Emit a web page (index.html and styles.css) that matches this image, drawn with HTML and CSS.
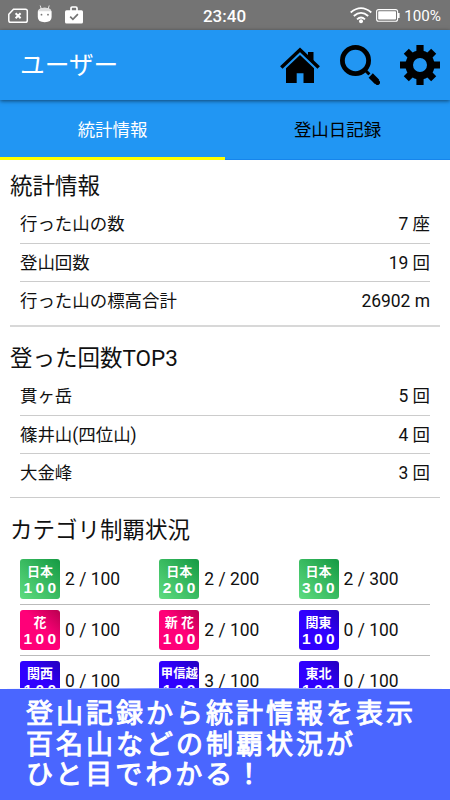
FILE: index.html
```html
<!DOCTYPE html>
<html lang="ja">
<head>
  <meta charset="UTF-8">
  <meta name="viewport" content="width=device-width, initial-scale=1.0">
  <title>ユーザー</title>
  <link rel="stylesheet" href="styles.css">
</head>
<body>
  <div class="status-bar">
    <div class="status-left">
      <svg class="icon-sim" width="22" height="16" viewBox="0 0 22 16"><path d="M5.5 1.2H17.5Q19.3 1.2 19.3 3V12.5Q19.3 14.3 17.5 14.3H2.6Q.8 14.3.8 12.5V6.2Z" fill="none" stroke="#fff" stroke-width="1.5"/><path d="M7.6 5.3l5 5M12.6 5.3l-5 5" stroke="#fff" stroke-width="2"/></svg>
      <svg class="icon-droid" width="16" height="18" viewBox="0 0 16 18"><path d="M3.2.5l1.3 4M12.2.5L11 4.500" stroke="#e4e4e4" stroke-width="1"/><path d="M.8 6.500Q2 2.800 7.700 2.800T14.600 6.500V12Q14.600 17.200 7.700 17.200T.8 12Z" fill="#fff"/><path d="M1 6.200Q2 2.800 7.700 2.800T14.400 6.200Z" fill="#ddd"/><circle cx="4.500" cy="9.700" r=".9" fill="#777"/><circle cx="11" cy="9.700" r=".9" fill="#777"/></svg>
      <svg class="icon-bag" width="18" height="18" viewBox="0 0 18 18"><path d="M6 5V2.200Q6 1 7.200 1H10.800Q12 1 12 2.200V5" fill="none" stroke="#fff" stroke-width="1.700"/><rect y="4.300" width="18" height="13.200" rx="1.500" fill="#fff"/><path d="M5.200 10.600l2.700 2.700 5-5.200" fill="none" stroke="#747474" stroke-width="1.700"/></svg>
    </div>
    <div class="clock">23:40</div>
    <div class="status-right">
      <svg class="icon-wifi" width="22" height="17" viewBox="0 0 22 17"><g fill="none" stroke="#fff" stroke-width="1.800"><path d="M.7 5.500Q11-3.200 21.300 5.500"/><path d="M3.800 9Q11 2.700 18.200 9"/><path d="M7 12.300Q11 8.700 15 12.300"/></g><circle cx="11" cy="14.300" r="2" fill="#fff"/></svg>
      <svg class="icon-battery" width="24" height="13" viewBox="0 0 24 13"><rect x=".6" y=".6" width="21" height="11.600" rx="2" fill="none" stroke="#fff" stroke-width="1.100"/><rect x="2.200" y="2.200" width="17.800" height="8.400" rx=".8" fill="#fff"/><path d="M22 4h1.600v5H22z" fill="#fff"/></svg>
      <span>100%</span>
    </div>
  </div>

  <header class="header">
    <h1>ユーザー</h1>
    <div class="header-icons">
      <svg width="40" height="40" viewBox="0 0 40 40"><path d="M1.300 22.500L20 4.800 38.700 22.500" fill="none" stroke="#000" stroke-width="3.500"/><path d="M28 7h5.500v11L28 12.800z"/><path d="M20 10L34 23.200V38H23.500V28.200H16.700V38H6V23.200z"/></svg>
      <svg width="40" height="40" viewBox="0 0 40 40"><circle cx="15.500" cy="15.500" r="13.100" fill="none" stroke="#000" stroke-width="4.800"/><path d="M24.500 24.500l5 5" stroke="#000" stroke-width="3"/><path d="M30.700 30.500l6.400 6.300" stroke="#000" stroke-width="6" stroke-linecap="butt"/><path d="M35.500 35.500l2 2" stroke="#000" stroke-width="5" stroke-linecap="round"/><path d="M27.300 32.300l5-5" stroke="#2196f3" stroke-width="1"/></svg>
      <svg width="40" height="40" viewBox="0 0 40 40"><g stroke="#000" stroke-width="7.200"><path d="M20 0V11M20 29V40M0 20H11M29 20H40"/><path d="M6.300 6.300L13 13M27 27l6.700 6.700M33.700 6.300L27 13M13 27l-6.700 6.700"/></g><circle cx="20" cy="20" r="10.800" fill="none" stroke="#000" stroke-width="7.600"/></svg>
    </div>
  </header>

  <nav class="tabs">
    <div class="tab active">統計情報</div>
    <div class="tab">登山日記録</div>
  </nav>

  <main>
    <section class="stats">
      <h2>統計情報</h2>
      <ul class="list">
        <li><span>行った山の数</span><span>7 座</span></li>
        <li><span>登山回数</span><span>19 回</span></li>
        <li><span>行った山の標高合計</span><span>26902 m</span></li>
      </ul>
    </section>

    <section class="ranking">
      <h2>登った回数TOP3</h2>
      <ul class="list">
        <li><span>貫ヶ岳</span><span>5 回</span></li>
        <li><span>篠井山(四位山)</span><span>4 回</span></li>
        <li><span>大金峰</span><span>3 回</span></li>
      </ul>
    </section>

    <section class="category">
      <h2>カテゴリ制覇状況</h2>
      <div class="category-row">
        <div class="item"><div class="badge green"><span>日本</span><b>100</b></div>2 / 100</div>
        <div class="item"><div class="badge green"><span>日本</span><b>200</b></div>2 / 200</div>
        <div class="item"><div class="badge green"><span>日本</span><b>300</b></div>2 / 300</div>
      </div>
      <div class="category-row">
        <div class="item"><div class="badge pink"><span>花</span><b>100</b></div>0 / 100</div>
        <div class="item"><div class="badge pink"><span>新 花</span><b>100</b></div>2 / 100</div>
        <div class="item"><div class="badge blue"><span>関東</span><b>100</b></div>0 / 100</div>
      </div>
      <div class="category-row">
        <div class="item"><div class="badge blue"><span>関西</span><b>100</b></div>0 / 100</div>
        <div class="item"><div class="badge blue"><span class="narrow">甲信越</span><b>100</b></div>3 / 100</div>
        <div class="item"><div class="badge blue"><span>東北</span><b>100</b></div>0 / 100</div>
      </div>
    </section>
  </main>

  <div class="caption">
    登山記録から統計情報を表示<br>
    百名山などの制覇状況が<br>
    ひと目でわかる！
  </div>
</body>
</html>
```
FILE: styles.css
```css
* {
  box-sizing: border-box;
}

body {
  margin: 0;
  height: 800px;
  overflow: hidden;
  display: flex;
  flex-direction: column;
  background: #fff;
  color: #111;
  font-family: Roboto, "Noto Sans CJK JP", sans-serif;
  font-size: 17.45px;
}

svg {
  display: block;
  flex: none;
}

h1, h2 {
  margin: 0;
  font-weight: 400;
}

.status-bar {
  flex: none;
  height: 30px;
  padding: 0 10px 0 8px;
  display: grid;
  grid-template-columns: 1fr auto 1fr;
  align-items: center;
  background: #747474;
  color: #fff;
}

.status-left, .status-right {
  display: flex;
  align-items: center;
}

.icon-droid {
  margin: -3px 0 0 7px;
}

.icon-bag {
  margin: -1px 0 0 12px;
}

.clock {
  font-size: 17px;
  font-weight: 500;
  line-height: 30px;
  padding: 1px 0 0 1px;
}

.status-right {
  justify-content: flex-end;
  font-size: 15.2px;
}

.status-right span {
  margin-left: 4px;
  margin-right: -1px;
}

.icon-wifi {
  margin-top: -1px;
}

.icon-battery {
  margin-left: 4px;
  margin-top: -1px;
}

.header {
  flex: none;
  height: 70px;
  padding: 0 10px 0 20px;
  display: flex;
  align-items: center;
  justify-content: space-between;
  position: relative;
  background: #2196f3;
  box-shadow: 0 1px 4px rgba(0, 0, 0, .55);
}

.header h1 {
  color: #fff;
  font-size: 24.7px;
  line-height: 70px;
  padding-top: 2px;
}

.header-icons {
  display: flex;
  gap: 20px;
}

.tabs {
  flex: none;
  height: 60px;
  display: flex;
  background: #2196f3;
}

.tab {
  flex: 1;
  height: 60px;
  line-height: 61px;
  text-align: center;
  color: #000;
  border-bottom: 1px solid #1685ec;
}

.tab.active {
  color: #fff;
  border-bottom: 3px solid #ffff00;
}

main {
  flex: 1;
  min-height: 0;
  overflow: hidden;
  padding: 0 10px;
}

section {
  padding: 12px 0 4px;
  border-bottom: 1px solid #ccc;
}

section h2 {
  height: 38px;
  line-height: 38px;
  font-size: 22.5px;
}

.stats {
  padding-top: 7px;
  border-bottom: 2px solid #d8d8d8;
}

.list {
  list-style: none;
  margin: 0;
  padding: 0 10px;
}

.list li {
  height: 38.7px;
  line-height: 39.6px;
  display: flex;
  justify-content: space-between;
  border-bottom: 1px solid #ccc;
}

.list li:last-child {
  border-bottom: none;
}

.category {
  padding-top: 13px;
  border-bottom: none;
}

.category h2 {
  height: 42.5px;
}

.category-row {
  margin: 0 10px;
  height: 51.3px;
  display: grid;
  grid-template-columns: 139.3px 139.3px 1fr;
  align-items: center;
  border-bottom: 1px solid #bbb;
}

.item {
  display: flex;
  align-items: center;
  gap: 5px;
}

.badge {
  width: 40px;
  height: 40px;
  padding-top: 5px;
  border-radius: 3px;
  color: #fff;
  text-align: center;
  font-weight: 700;
}

.badge span, .badge b {
  display: block;
  font-size: 13px;
  line-height: 16px;
  white-space: nowrap;
}

.badge b {
  font-family: "Liberation Sans", sans-serif;
  font-size: 15.5px;
  letter-spacing: 3.4px;
  padding-left: 3px;
}

.badge .narrow {
  font-size: 12.3px;
}

.green {
  background: linear-gradient(45deg, #5fdc80, #159a43);
}

.pink {
  background: linear-gradient(45deg, #ff0078 55%, #b8004f);
}

.blue {
  background: linear-gradient(45deg, #3000ff 55%, #2400bd);
}

.caption {
  flex: none;
  height: 112px;
  padding: 9px 0 0 26px;
  background: #4a66ff;
  clip-path: polygon(0 1px, 50% 0, 100% 1px, 100% 100%, 0 100%);
  color: #fff;
  font-family: "Noto Sans CJK JP", sans-serif;
  font-size: 27px;
  font-weight: 400;
  -webkit-text-stroke: 1px #fff;
  letter-spacing: 3px;
  line-height: 30.7px;
  white-space: nowrap;
}
```
